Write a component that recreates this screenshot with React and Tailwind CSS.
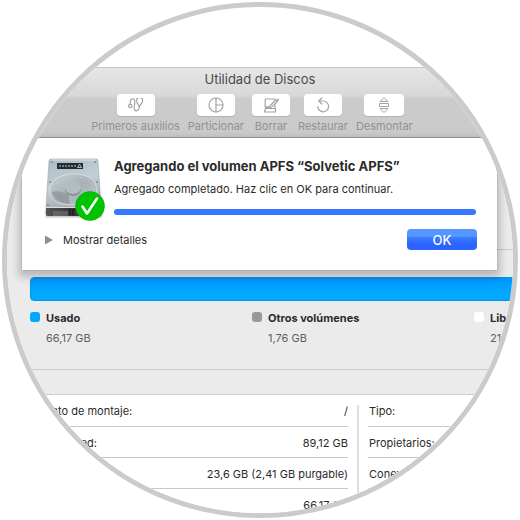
const line = { fill: 'none', stroke: '#a3a3a3', strokeWidth: 1.2, strokeLinecap: 'round', strokeLinejoin: 'round' };

function StethoscopeIcon() {
  return (
    <svg width="16" height="16" viewBox="0 0 16 16" aria-hidden="true" {...line}>
      <circle cx="2.300" cy="9" r="1.700" />
      <path d="M2.300 7.300C1.800 4 2.800 1.800 4.600 1.800c2.600 0 2.400 3 2 5.200C6 10.500 5.600 13.500 8 13.800c2.500.2 3.300-2 3.300-4.800" />
      <path d="M9.800 1.500H8.700v3c0 2 1.900 2.600 2.100 4.500h1.200c.2-1.900 2.500-2.700 2.500-4.500v-3h-1.200" />
    </svg>
  );
}

function PartitionIcon() {
  return (
    <svg width="16" height="16" viewBox="0 0 16 16" aria-hidden="true" {...line}>
      <circle cx="8" cy="8" r="7" />
      <path d="M8 1v14M8 8h7" />
    </svg>
  );
}

function EraseIcon() {
  return (
    <svg width="16" height="16" viewBox="0 0 16 16" aria-hidden="true" {...line}>
      <path d="M11.500 2H2.200v7.500" />
      <path d="M2.500 11.500h10V15h-11l1-3.500" />
      <path d="M15.200 2.200 12 4 7.500 8.300c-1.200 1.200-2.500 1.700-5.500 1.700 2.600 1 5.800 1 7.300-.6L14.300 4.800z" />
      <path d="M12 2.200v1.600M12 8v3.500" />
    </svg>
  );
}

function RestoreIcon() {
  return (
    <svg width="16" height="16" viewBox="0 0 16 16" aria-hidden="true" {...line}>
      <path d="M2.800 9.500A5.400 5.400 0 1 0 8.200 4H4" />
      <path d="M6.800 1 3.800 4l3 3" />
    </svg>
  );
}

function UnmountIcon() {
  return (
    <svg width="16" height="16" viewBox="0 0 16 16" aria-hidden="true" fill="none" stroke="#a3a3a3" strokeWidth="1" strokeLinejoin="round">
      <path d="M8 .5l4 4H4zM8 15.500l4-4H4zM3.500 6.500h9v3h-9z" />
    </svg>
  );
}

function DiskIcon() {
  return (
    <svg width="64" height="68" viewBox="0 0 64 68" role="img" aria-label="Disco">
      <defs>
        <linearGradient id="plate" x1="0" y1="0" x2="0.3" y2="1">
          <stop offset="0" stopColor="#a9bac2" />
          <stop offset="0.5" stopColor="#c2d0d6" />
          <stop offset="1" stopColor="#9ba5aa" />
        </linearGradient>
        <linearGradient id="platter" x1="0" y1="0" x2="1" y2="1">
          <stop offset="0" stopColor="#c6d3d8" />
          <stop offset="0.5" stopColor="#a8b1b5" />
          <stop offset="1" stopColor="#c0cace" />
        </linearGradient>
        <linearGradient id="front" x1="0" y1="0" x2="1" y2="0">
          <stop offset="0" stopColor="#555" />
          <stop offset="0.5" stopColor="#333" />
          <stop offset="1" stopColor="#777" />
        </linearGradient>
      </defs>
      <path d="M2 56h58v5a2 2 0 0 1-2 2H4a2 2 0 0 1-2-2z" fill="#ddd" />
      <path d="M8 4h45q2 0 2 2l3 46v7q0 2-2 2H5q-2 0-2-2v-7L6 6q0-2 2-2z" fill="url(#plate)" stroke="#9aa4a8" strokeWidth="0.6" />
      <path d="M8 5h45" stroke="#dfe7ea" strokeWidth="1" />
      <path d="M7 36C7 25 17 19 31 19s23 7 23 17-8 14-23 14S7 46 7 36z" fill="url(#platter)" stroke="#d3dde1" strokeWidth="1" />
      <path d="M9 37c2 8 10 12 18 12l-2-10c-5-1-9-4-16-2z" fill="#8c9396" opacity="0.7" />
      <path d="M12 31c4-7 11-10 19-10M37 22c8 1 13 6 14 13" fill="none" stroke="#b9c4c8" strokeWidth="1" />
      <ellipse cx="30" cy="33" rx="8" ry="6" fill="#b4bcc0" />
      <path d="M22 33a8 6 0 0 0 16 0v2a8 6 0 0 1-16 0z" fill="#8b9396" />
      <path d="M3 53h55v6q0 2-2 2H5q-2 0-2-2z" fill="url(#front)" />
      <path d="M3 52.500h55" stroke="#e3dcd2" strokeWidth="1" />
      <path d="M10 56h15v5H10z" fill="#8a8a8a" opacity="0.45" />
      <path d="M27 54v6M30 54v6" stroke="#111" strokeWidth="1" />
      <path d="M14 8h26v6H14z" fill="#272b2d" />
      <path d="M16 11h17" stroke="#8d9699" strokeWidth="1.500" strokeDasharray="2 1" />
      <path d="M36.500 9.200l2 3.300h-4z" fill="none" stroke="#d7dfe2" strokeWidth="0.8" />
      <g fill="#59636a">
        <circle cx="9" cy="7" r="0.8" />
        <circle cx="52" cy="7" r="0.8" />
        <circle cx="7" cy="27" r="0.8" />
        <circle cx="54" cy="27" r="0.8" />
        <circle cx="5" cy="50" r="0.8" />
      </g>
      <circle cx="47" cy="51" r="14.500" fill="#00c400" stroke="#12a012" strokeWidth="0.6" />
      <path d="M39.500 51.500l4.500 7L54 43.500" fill="none" stroke="#fff" strokeWidth="2.600" strokeLinecap="round" strokeLinejoin="round" />
    </svg>
  );
}

const tools = [
  { label: 'Primeros auxilios', Icon: StethoscopeIcon, width: 'w-[38px]' },
  { label: 'Particionar', Icon: PartitionIcon, width: 'w-[38px]' },
  { label: 'Borrar', Icon: EraseIcon, width: 'w-[38px]' },
  { label: 'Restaurar', Icon: RestoreIcon, width: 'w-[38px]' },
  { label: 'Desmontar', Icon: UnmountIcon, width: 'w-10' },
];

const legend = [
  { name: 'Usado', size: '66,17 GB', swatch: 'bg-[#00a8ff]' },
  { name: 'Otros volúmenes', size: '1,76 GB', swatch: 'bg-[#999999]' },
  { name: 'Libre', size: '21 GB', swatch: 'bg-white' },
];

const volume = [
  ['Punto de montaje:', '/'],
  ['Capacidad:', '89,12 GB'],
  ['Disponible:', '23,6 GB (2,41 GB purgable)'],
  ['Usado:', '66,17 GB'],
];

const device = ['Tipo:', 'Propietarios:', 'Conexión:'];

function Toolbar() {
  return (
    <header className="h-[71px] border-t border-b border-t-[#c4c4c4] border-b-[#999999] bg-linear-to-b from-[#e6e6e6] from-0% via-[#d8d8d8] via-40% to-[#cbcbcb] to-45%">
      <h1 className="pt-[3px] text-center text-[13px] leading-4 text-[#4a4a4a]">Utilidad de Discos</h1>
      <nav className="mt-[7px] flex justify-center gap-2 pr-4">
        {tools.map(({ label, Icon, width }) => (
          <button key={label} type="button" className="flex flex-col items-center gap-[3px] text-[11px] leading-3.5 text-[#919191]">
            <span className={`flex h-[22px] items-center justify-center rounded-sm bg-white shadow-[0_1px_0_#b3b3b3] ${width}`}>
              <Icon />
            </span>
            {label}
          </button>
        ))}
      </nav>
    </header>
  );
}

function Sheet() {
  return (
    <section
      role="dialog"
      aria-labelledby="sheet-title"
      className="absolute top-0 right-4 left-[15px] bg-white px-5 pt-[17px] pb-5 shadow-[0_0_1px_#888888,0_4px_8px_3px_rgba(0,0,0,0.22)]"
    >
      <div className="flex gap-[7px] px-px">
        <DiskIcon />
        <div className="flex-1">
          <h2 id="sheet-title" className="pt-[3px] text-[13px] leading-4 font-bold text-[#2b2b2b]">
            Agregando el volumen APFS “Solvetic APFS”
          </h2>
          <p className="mt-2 text-[11px] leading-3.5 text-[#2b2b2b]">Agregado completado. Haz clic en OK para continuar.</p>
          <progress
            value="100"
            max="100"
            aria-label="Progreso"
            className="mt-[13px] block h-1.5 w-full appearance-none overflow-hidden rounded-full bg-[#3478ff] [&::-webkit-progress-bar]:bg-[#dddddd] [&::-webkit-progress-value]:bg-[#3478ff]"
          />
        </div>
      </div>
      <div className="mt-1.5 flex items-center justify-between pl-[3px]">
        <button type="button" aria-expanded="false" className="flex items-center gap-2.5 text-[11px] leading-3.5 text-[#2b2b2b]">
          <svg width="8" height="10" viewBox="0 0 8 10" aria-hidden="true">
            <path d="M0 0.500v9L8 5z" fill="#8e8e8e" />
          </svg>
          Mostrar detalles
        </button>
        <button
          type="button"
          className="h-[21px] w-[70px] rounded-sm bg-linear-to-b from-[#5596ff] from-35% via-[#3b7dff] via-40% to-[#2c63ff] to-70% text-[13px] leading-4 font-medium text-white"
        >
          OK
        </button>
      </div>
    </section>
  );
}

function Usage() {
  return (
    <section className="bg-[#ebebeb] pb-6">
      <div className="ml-[23px] h-28 border-b border-[#cccccc]" />
      <div className="mt-[27px] ml-[23px] h-6 rounded-l-sm border border-[#0093e6] bg-linear-to-b from-[#0096ff] to-[#00a8ff] to-60%" />
      <ul className="ml-[23px] grid grid-cols-[222px_222px_1fr] pt-2.5 pb-6">
        {legend.map((item) => (
          <li key={item.name} className="flex gap-1.5 text-[11px] leading-3.5">
            <span className={`mt-px size-2.5 shrink-0 rounded-[3px] ${item.swatch}`} />
            <div className="whitespace-nowrap">
              <p className="font-bold text-[#2b2b2b]">{item.name}</p>
              <p className="mt-1.5 text-[#5f5f5f]">{item.size}</p>
            </div>
          </li>
        ))}
      </ul>
      <hr className="border-[#cccccc]" />
    </section>
  );
}

function Details() {
  return (
    <section className="flex border-t border-[#cccccc] bg-white text-[11px] leading-3.5 text-[#2b2b2b]">
      <table className="ml-[31px] w-[310px] border-collapse">
        <tbody>
          {volume.map(([name, value]) => (
            <tr key={name} className="h-[31px] border-b border-[#c8c8c8]">
              <th scope="row" className="pt-0.5 text-left font-normal">{name}</th>
              <td className="pt-0.5 text-right">{value}</td>
            </tr>
          ))}
        </tbody>
      </table>
      <div className="mx-[9px] mt-2.5 w-0.5 bg-[#dedede]" />
      <table className="flex-1 self-start border-collapse">
        <tbody>
          {device.map((name) => (
            <tr key={name} className="h-[31px] border-b border-[#c8c8c8]">
              <th scope="row" className="pt-0.5 pl-px text-left font-normal">{name}</th>
            </tr>
          ))}
        </tbody>
      </table>
    </section>
  );
}

export default function App() {
  return (
    <main className="bg-white p-0.5 font-[Inter,'Liberation_Sans',sans-serif]">
      <div className="aspect-square w-full overflow-hidden rounded-full border-5 border-[#cbcbcb] bg-white pt-[60px]">
        <Toolbar />
        <div className="relative">
          <Usage />
          <Sheet />
        </div>
        <Details />
      </div>
    </main>
  );
}
